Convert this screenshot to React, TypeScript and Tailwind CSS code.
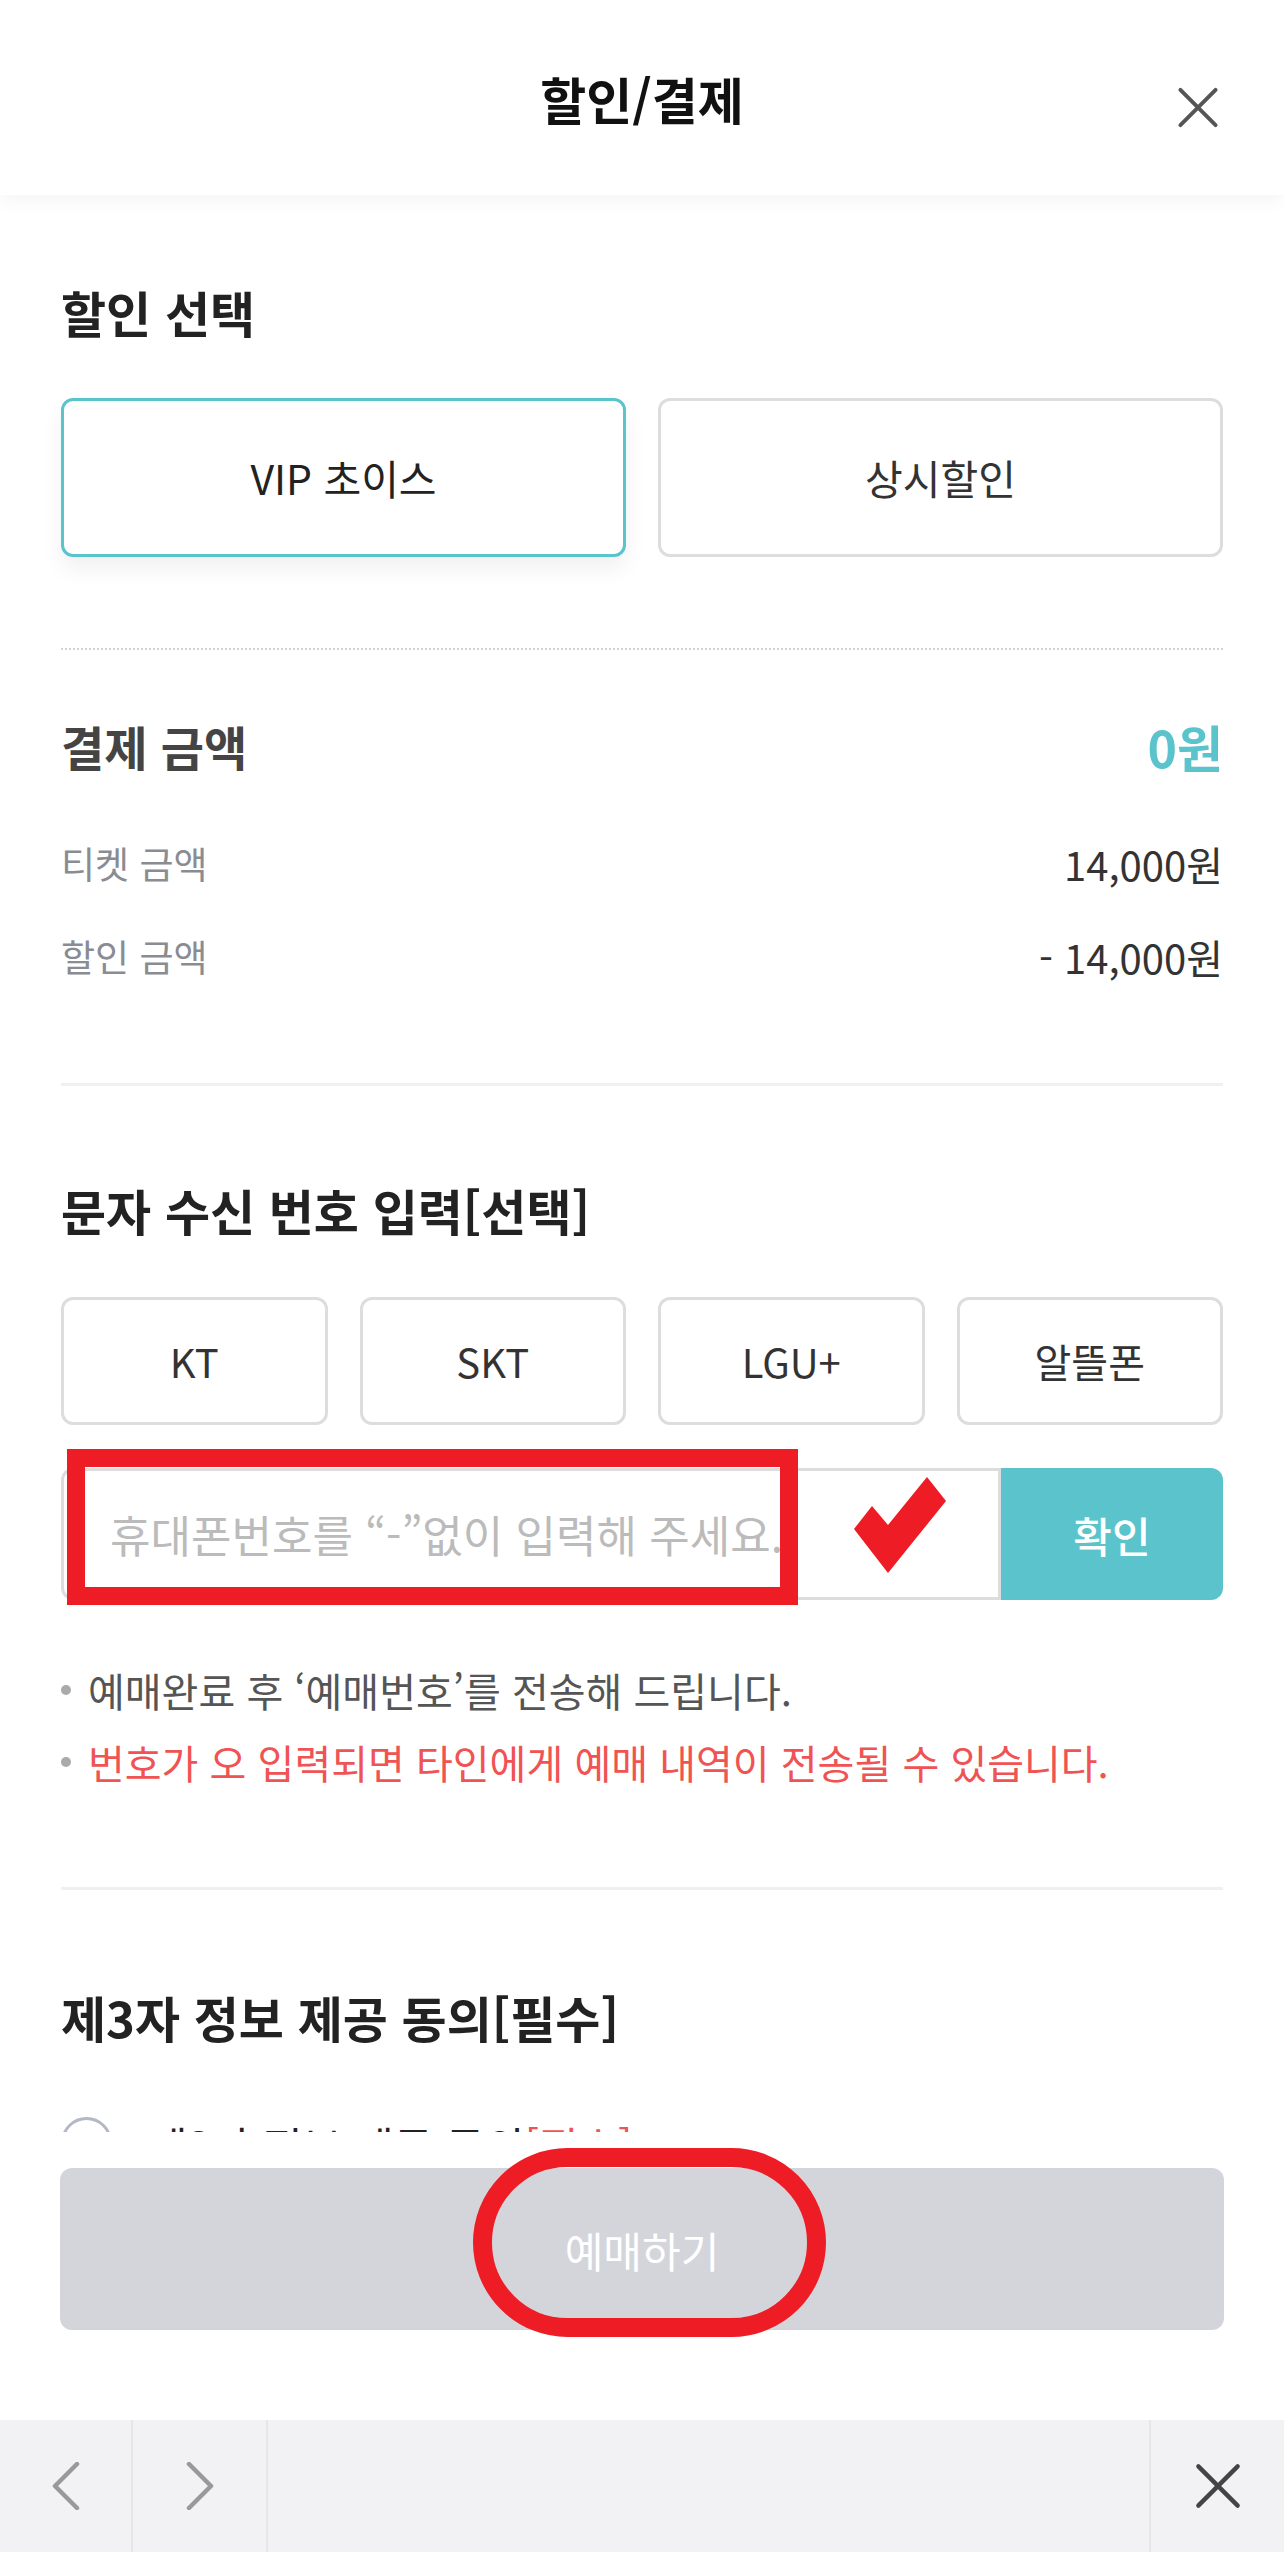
import { useState } from "react";

const font = { fontFamily: '"Noto Sans CJK KR", "Noto Sans", sans-serif' };

const carriers = ["KT", "SKT", "LGU+", "알뜰폰"];

const XIcon = ({ className }: { className?: string }) => (
  <svg viewBox="0 0 44 44" className={className} fill="none" stroke="currentColor" strokeWidth="4" strokeLinecap="round">
    <path d="M4 4 L40 40 M40 4 L4 40" />
  </svg>
);

export default function App() {
  const [discount, setDiscount] = useState("vip");
  const [phone, setPhone] = useState("");

  return (
    <div lang="ko" style={font} className="w-[1284px] h-[2576px] bg-white flex flex-col overflow-hidden">
      {/* header */}
      <div className="relative z-10 h-[195px] shrink-0 flex items-center justify-center bg-white shadow-[0_8px_16px_rgba(0,0,0,0.035)]">
        <h1 className="text-[50px] leading-[56px] font-bold text-[#111]">할인/결제</h1>
        <button className="absolute right-[64px] top-[86px] text-[#555]">
          <XIcon className="w-[44px] h-[43px]" />
        </button>
      </div>

      {/* scroll body */}
      <div className="h-[1937px] shrink-0 overflow-hidden px-[61px] pt-[90px]">
        <h2 className="text-[49px] leading-[54px] font-bold text-[#222]">할인 선택</h2>
        <div className="mt-[59px] grid grid-cols-2 gap-[32px]">
          <button
            onClick={() => setDiscount("vip")}
            className={
              discount === "vip"
                ? "h-[159px] rounded-[12px] border-[3px] border-[#5bc3cb] bg-white text-[41px] text-[#222] shadow-[0_12px_22px_rgba(0,0,0,0.06)]"
                : "h-[159px] rounded-[12px] border-[3px] border-[#dddddd] bg-white text-[41px] text-[#333]"
            }
          >
            VIP 초이스
          </button>
          <button
            onClick={() => setDiscount("always")}
            className={
              discount === "always"
                ? "h-[159px] rounded-[12px] border-[3px] border-[#5bc3cb] bg-white text-[41px] text-[#222] shadow-[0_12px_22px_rgba(0,0,0,0.06)]"
                : "h-[159px] rounded-[12px] border-[3px] border-[#dddddd] bg-white text-[41px] text-[#333]"
            }
          >
            상시할인
          </button>
        </div>

        <div className="mt-[91px] border-t-2 border-dotted border-[#d4d4d4]" />

        <div className="mt-[69px] flex items-center justify-between h-[54px]">
          <span className="text-[47px] font-bold text-[#444]">결제 금액</span>
          <span className="text-[50px] font-bold text-[#5bc3cb]">0원</span>
        </div>
        <div className="mt-[69px] flex items-center justify-between h-[43px]">
          <span className="text-[37px] text-[#8a8c94]">티켓 금액</span>
          <span className="text-[40px] text-[#333]">14,000원</span>
        </div>
        <div className="mt-[50px] flex items-center justify-between h-[43px]">
          <span className="text-[37px] text-[#8a8c94]">할인 금액</span>
          <span className="text-[40px] text-[#333]">- 14,000원</span>
        </div>

        <div className="mt-[105px] border-t-[3px] border-[#f0f0f0]" />

        <h2 className="mt-[97px] text-[49px] leading-[54px] font-bold text-[#222]">문자 수신 번호 입력[선택]</h2>
        <div className="mt-[60px] grid grid-cols-4 gap-[32px]">
          {carriers.map((c) => (
            <button key={c} className="h-[128px] rounded-[12px] border-[3px] border-[#dddddd] bg-white text-[40px] text-[#333]">
              {c}
            </button>
          ))}
        </div>

        <div className="relative mt-[43px] flex h-[132px]">
          <input
            value={phone}
            onChange={(e) => setPhone(e.target.value)}
            placeholder="휴대폰번호를 “-”없이 입력해 주세요."
            className="flex-1 min-w-0 h-full rounded-l-[12px] border-[3px] border-r-0 border-[#dddddd] pl-[46px] text-[44px] text-[#333] placeholder:text-[#bbbbbb] outline-none"
          />
          <div className="w-[3px] bg-[#dddddd]" />
          <button className="w-[222px] h-full rounded-r-[12px] bg-[#5bc3cb] text-[42px] font-medium text-white">확인</button>

          {/* red annotations */}
          <div className="pointer-events-none absolute left-[6px] top-[-19px] w-[731px] h-[156px] border-[18px] border-[#ee1c25]" />
          <svg className="pointer-events-none absolute left-[793px] top-[9px] w-[92px] h-[96px]" viewBox="0 0 92 96">
            <polygon points="0,52 18,29 34,48 73,0 92,24 34,96" fill="#ee1c25" />
          </svg>
        </div>

        <ul className="mt-[54px] text-[40px] leading-[72px]">
          <li className="flex items-center text-[#555]">
            <span className="w-[10px] h-[10px] rounded-full bg-[#aaa] mr-[17px]" />
            예매완료 후 ‘예매번호’를 전송해 드립니다.
          </li>
          <li className="flex items-center text-[#f05353]">
            <span className="w-[10px] h-[10px] rounded-full bg-[#aaa] mr-[17px]" />
            번호가 오 입력되면 타인에게 예매 내역이 전송될 수 있습니다.
          </li>
        </ul>

        <div className="mt-[89px] border-t-[3px] border-[#f0f0f0]" />

        <h2 className="mt-[100px] text-[49px] leading-[54px] font-bold text-[#222]">제3자 정보 제공 동의[필수]</h2>
        <label className="mt-[73px] flex items-start gap-[36px]">
          <span className="w-[51px] h-[51px] rounded-full border-[3px] border-[#b4b7c4] shrink-0" />
          <span className="pt-[4px] text-[43px] leading-[48px] text-[#222]">
            제3자 정보 제공 동의<span className="text-[#f05353]">[필수]</span>
          </span>
        </label>
      </div>

      {/* bottom action */}
      <div className="h-[288px] shrink-0 px-[60px] pt-[36px]">
        <div className="relative">
          <button className="w-full h-[162px] rounded-[12px] bg-[#d4d5db] text-[42px] text-white">예매하기</button>
          <div className="pointer-events-none absolute left-[413px] top-[-20px] w-[353px] h-[189px] rounded-full border-[19px] border-[#ee1c25]" />
        </div>
      </div>

      {/* browser toolbar */}
      <div className="h-[132px] shrink-0 flex bg-[#f2f2f4]">
        <button className="w-[133px] flex items-center justify-center border-r-2 border-[#e6e6e9] text-[#999]">
          <svg viewBox="0 0 28 48" className="w-[28px] h-[48px]" fill="none" stroke="currentColor" strokeWidth="4.5" strokeLinecap="round" strokeLinejoin="round">
            <path d="M25 2 L3 24 L25 46" />
          </svg>
        </button>
        <button className="w-[135px] flex items-center justify-center border-r-2 border-[#e6e6e9] text-[#999]">
          <svg viewBox="0 0 28 48" className="w-[28px] h-[48px]" fill="none" stroke="currentColor" strokeWidth="4.5" strokeLinecap="round" strokeLinejoin="round">
            <path d="M3 2 L25 24 L3 46" />
          </svg>
        </button>
        <div className="flex-1 border-r-2 border-[#e6e6e9]" />
        <button className="w-[133px] flex items-center justify-center text-[#444]">
          <XIcon className="w-[48px] h-[48px]" />
        </button>
      </div>
      <div className="flex-1 bg-white" />
    </div>
  );
}
